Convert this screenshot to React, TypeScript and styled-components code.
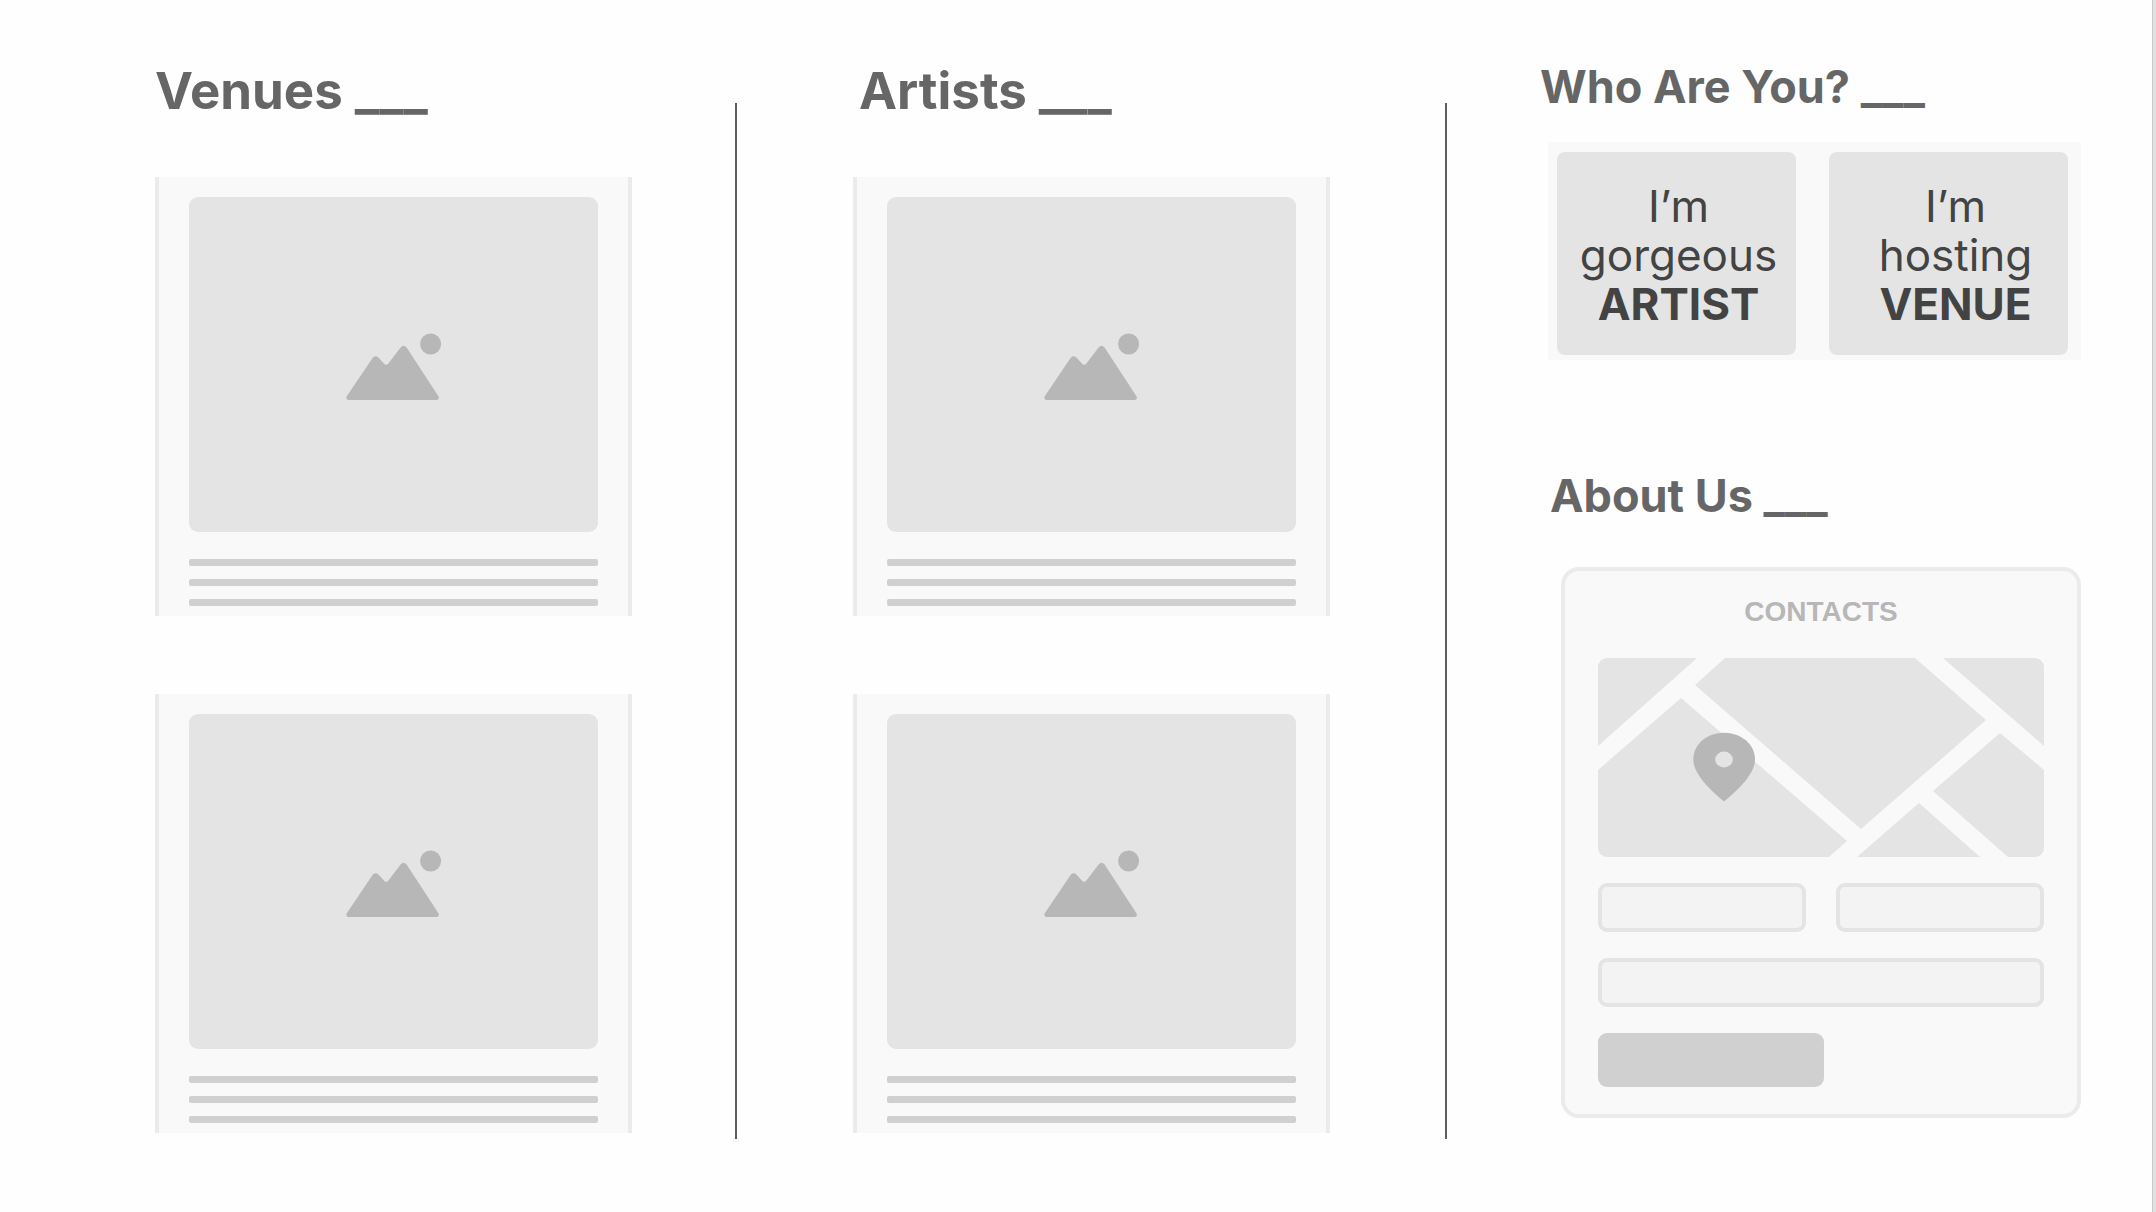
import React from "react";
import styled, { createGlobalStyle } from "styled-components";

const GlobalStyle = createGlobalStyle`
  *, *::before, *::after { box-sizing: border-box; }
  body { margin: 0; background: #fefefe; font-family: Inter, "Open Sans", sans-serif; }
`;

const Page = styled.main`
  display: grid;
  grid-template-columns: minmax(0, 477fr) auto minmax(0, 477fr) auto minmax(0, 541fr);
  min-height: 100vh;
  padding: 62px 72px 73px 155px;
  border-right: 3px solid #e2e2e2;
  box-shadow: inset -1px 0 #c8c8c8;
`;

const Divider = styled.div<{ $before: number; $after: number }>`
  width: 2px;
  margin: 41px ${(p) => p.$after}px 0 ${(p) => p.$before}px;
  background: #5e5e5e;
`;

const Column = styled.section`
  display: flex;
  flex-direction: column;
`;

const Heading = styled.h2<{ $indent?: number }>`
  margin: 0;
  padding-left: ${(p) => p.$indent ?? 0}px;
  font-size: 51px;
  line-height: 58px;
  font-weight: 700;
  color: #666;
  white-space: nowrap;
`;

const SideHeading = styled(Heading)`
  font-size: 45px;
  line-height: 50px;
`;

const CardList = styled.div`
  display: flex;
  flex-direction: column;
  gap: 78px;
  margin-top: 57px;
`;

const Card = styled.article`
  padding: 20px 30px 10px;
  border: solid #ebebeb;
  border-width: 0 4px;
  background: #f9f9f9;
`;

const Picture = styled.div`
  display: flex;
  align-items: center;
  justify-content: center;
  aspect-ratio: 409 / 335;
  padding-top: 5px;
  border-radius: 9px;
  background: #e4e4e4;
`;

const Lines = styled.div`
  display: flex;
  flex-direction: column;
  gap: 13px;
  margin-top: 27px;
`;

const Line = styled.div`
  height: 7px;
  border-radius: 2px;
  background: #d0d0d0;
`;

const Choices = styled.div`
  display: grid;
  grid-template-columns: 1fr 1fr;
  gap: 33px;
  margin: 30px 0 111px 8px;
  padding: 10px 13px 5px 9px;
  background: #f9f9f9;
`;

const Choice = styled.button<{ $shift: number }>`
  padding: 30px 0 26px ${(p) => p.$shift}px;
  border: 0;
  border-radius: 8px;
  background: #e4e4e4;
  color: #434343;
  font: 400 44px/49px Inter, "Open Sans", sans-serif;
  cursor: pointer;

  span, strong { display: block; }
`;

const Contacts = styled.form`
  display: grid;
  grid-template-columns: 1fr 1fr;
  column-gap: 30px;
  row-gap: 26px;
  margin: 46px 0 0 21px;
  padding: 28px 33px 27px;
  border: 4px solid #ebebeb;
  border-radius: 18px;
  background: #f9f9f9;
`;

const ContactsTitle = styled.h3`
  grid-column: 1 / -1;
  margin: 0 0 7px;
  text-align: center;
  font: 700 28px/26px "Liberation Sans", Arial, sans-serif;
  color: #b7b7b7;
`;

const Map = styled.svg`
  grid-column: 1 / -1;
  display: block;
  width: 100%;
  border-radius: 9px;
`;

const Field = styled.input<{ $wide?: boolean }>`
  grid-column: ${(p) => (p.$wide ? "1 / -1" : "auto")};
  width: 100%;
  height: 49px;
  padding: 0 12px;
  border: 4px solid #e4e4e4;
  border-radius: 9px;
  background: #f3f3f3;
  font: 400 20px/24px Inter, sans-serif;
  color: #434343;
`;

const Submit = styled.button`
  grid-column: 1 / -1;
  width: 226px;
  height: 54px;
  border: 0;
  border-radius: 9px;
  background: #d0d0d0;
  cursor: pointer;
`;

function MountainIcon() {
  return (
    <svg width="96" height="68" viewBox="0 0 96 68" fill="#b7b7b7" aria-hidden="true">
      <path d="M.6 63.6 26.2 25.4Q29 21.6 32.4 24.6L38.6 31.2Q40.4 32.6 42.2 30.8L54.6 14.4Q57.6 11 60.6 14.4L92.6 63.6Q93.6 66.6 91 67H2Q-.2 66.6.6 63.6Z" />
      <circle cx="84.6" cy="11" r="10.5" />
    </svg>
  );
}

function CardPlaceholder() {
  return (
    <Card>
      <Picture>
        <MountainIcon />
      </Picture>
      <Lines>
        <Line />
        <Line />
        <Line />
      </Lines>
    </Card>
  );
}

function StreetMap() {
  return (
    <Map viewBox="0 0 446 199" role="img" aria-label="Map">
      <g fill="#e4e4e4">
        <path d="M0 0H99L0 88Z" />
        <path d="M127 0H317L388 62 263 171 97 27Z" />
        <path d="M345 0H446V88Z" />
        <path d="M0 112 83 40 249 183 231 199H0Z" />
        <path d="M259 199 321 145 382 199Z" />
        <path d="M402 75 446 112V199H410L335 133Z" />
      </g>
      <path
        fill="#b7b7b7"
        d="M126 143.500C113 133 95.300 116 95.300 101.500C95.300 86 109 74.700 126 74.700S157 86 157 101.500C157 116 139 133 126 143.500Z"
      />
      <ellipse cx="126" cy="101.500" rx="8.800" ry="7.900" fill="#e4e4e4" />
    </Map>
  );
}

export default function App() {
  return (
    <>
      <GlobalStyle />
      <Page>
        <Column>
          <Heading>Venues ___</Heading>
          <CardList>
            <CardPlaceholder />
            <CardPlaceholder />
          </CardList>
        </Column>
        <Divider $before={103} $after={116} />
        <Column>
          <Heading $indent={6}>Artists ___</Heading>
          <CardList>
            <CardPlaceholder />
            <CardPlaceholder />
          </CardList>
        </Column>
        <Divider $before={115} $after={93} />
        <Column>
          <SideHeading>Who Are You? ___</SideHeading>
          <Choices>
            <Choice type="button" $shift={4}>
              <span>I’m</span>
              <span>gorgeous</span>
              <strong>ARTIST</strong>
            </Choice>
            <Choice type="button" $shift={14}>
              <span>I’m</span>
              <span>hosting</span>
              <strong>VENUE</strong>
            </Choice>
          </Choices>
          <SideHeading $indent={10}>About Us ___</SideHeading>
          <Contacts onSubmit={(e) => e.preventDefault()}>
            <ContactsTitle>CONTACTS</ContactsTitle>
            <StreetMap />
            <Field type="text" aria-label="Name" />
            <Field type="email" aria-label="Email" />
            <Field $wide type="text" aria-label="Message" />
            <Submit type="submit" aria-label="Send" />
          </Contacts>
        </Column>
      </Page>
    </>
  );
}
